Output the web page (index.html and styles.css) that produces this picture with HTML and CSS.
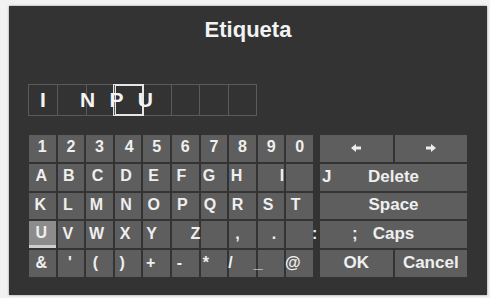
FILE: index.html
```html
<!DOCTYPE html>
<html lang="es">
<head>
<meta charset="utf-8">
<title>Etiqueta</title>
<link rel="stylesheet" href="styles.css">
</head>
<body>
<div class="screen">
  <h1 class="title">Etiqueta</h1>
  <div class="input">
    <div class="box"></div>
    <div class="box"></div>
    <div class="box"></div>
    <div class="box sel"></div>
    <div class="box"></div>
    <div class="box"></div>
    <div class="box"></div>
    <div class="box"></div>
    <div class="typed">I NPU</div>
  </div>
  <div class="keyboard">
    <div class="keys">
      <div class="k"><span>1</span></div>
      <div class="k"><span>2</span></div>
      <div class="k"><span>3</span></div>
      <div class="k"><span class="r1">4</span></div>
      <div class="k"><span>5</span></div>
      <div class="k"><span>6</span></div>
      <div class="k"><span>7</span></div>
      <div class="k"><span>8</span></div>
      <div class="k"><span>9</span></div>
      <div class="k"><span>0</span></div>

      <div class="k"><span class="l1">A</span></div>
      <div class="k"><span class="l2">B</span></div>
      <div class="k"><span class="l2">C</span></div>
      <div class="k"><span class="l2">D</span></div>
      <div class="k"><span class="l3">E</span></div>
      <div class="k"><span class="l4">F</span></div>
      <div class="k"><span class="l5">G</span></div>
      <div class="k"><span class="l6">H</span></div>
      <div class="k"><span class="r11">I</span></div>
      <div class="k"></div>

      <div class="k"><span class="l2">K</span></div>
      <div class="k"><span class="l3">L</span></div>
      <div class="k"><span class="l3">M</span></div>
      <div class="k"><span class="l2">N</span></div>
      <div class="k"><span class="l3">O</span></div>
      <div class="k"><span class="l3">P</span></div>
      <div class="k"><span class="l4">Q</span></div>
      <div class="k"><span class="l5">R</span></div>
      <div class="k"><span class="l3">S</span></div>
      <div class="k"><span class="l4">T</span></div>

      <div class="k on"><span class="l1">U</span></div>
      <div class="k"><span class="l3">V</span></div>
      <div class="k"><span class="l3">W</span></div>
      <div class="k"><span class="l3">X</span></div>
      <div class="k"><span class="l5">Y</span></div>
      <div class="k"><span class="r10">Z</span></div>
      <div class="k"></div>
      <div class="k"><span class="l5">,</span></div>
      <div class="k"><span class="r3">.</span></div>
      <div class="k"><span class="r15">:</span></div>

      <div class="k"><span class="l1">&amp;</span></div>
      <div class="k"><span class="l1">'</span></div>
      <div class="k"><span class="l4">(</span></div>
      <div class="k"><span class="l6">)</span></div>
      <div class="k"><span class="l6">+</span></div>
      <div class="k"><span class="l6">-</span></div>
      <div class="k"><span class="l8">*</span></div>
      <div class="k"><span class="l12">/</span></div>
      <div class="k"><span class="l13">_</span></div>
      <div class="k"><span class="l7">@</span></div>
    </div>
    <div class="keys side">
      <div class="k"><svg class="arrow" width="10" height="8" viewBox="0 0 10 8"><path d="M0 4 L5 0 V2.5 H10 V5.5 H5 V8 Z"/></svg></div>
      <div class="k"><svg class="arrow" width="10" height="8" viewBox="0 0 10 8"><path d="M10 4 L5 0 V2.5 H0 V5.5 H5 V8 Z"/></svg></div>
      <div class="k wide"><span class="j">J</span><span>Delete</span></div>
      <div class="k wide"><span></span><span>Space</span></div>
      <div class="k wide"><span class="semi">;</span><span>Caps</span></div>
      <div class="k"><span>OK</span></div>
      <div class="k"><span>Cancel</span></div>
    </div>
  </div>
</div>
</body>
</html>
```

FILE: styles.css
```css
html, body {
  margin: 0;
  padding: 0;
}

body {
  background: #f2f2f2;
  width: 490px;
  height: 298px;
  overflow: hidden;
  font-family: "Liberation Sans", Arial, sans-serif;
  color: #efefef;
}

.screen {
  margin: 6px 0 0 9px;
  width: 478px;
  height: 289px;
  box-sizing: border-box;
  padding-top: 12px;
  background: #333333;
  box-shadow: 0 0 2px #8a8a8a;
}

.title {
  margin: 0;
  font-size: 22px;
  line-height: 24px;
  font-weight: bold;
  text-align: center;
  color: #f2f2f2;
}

.input {
  position: relative;
  margin: 42px 0 0 19px;
  width: 229px;
  height: 32px;
  box-sizing: border-box;
  border: 1px solid #5a5a5a;
  display: grid;
  grid-template-columns: repeat(8, 1fr);
}

.box + .box {
  border-left: 1px solid #5a5a5a;
}

.sel {
  position: relative;
  z-index: 1;
  box-shadow: 0 0 0 1px #e6e6e6, inset 0 0 0 1px #e6e6e6;
}

.typed {
  position: absolute;
  left: 0;
  top: 0;
  right: 0;
  z-index: 2;
  padding-left: 11px;
  font-size: 21px;
  font-weight: bold;
  line-height: 29px;
  letter-spacing: 14.2px;
  white-space: pre;
  color: #f4f4f4;
}

.keyboard {
  margin: 19px 0 0 20px;
  display: flex;
  gap: 7px;
}

.keys {
  width: 284px;
  display: grid;
  grid-template-columns: repeat(10, 1fr);
  grid-auto-rows: 26.8px;
  gap: 2px;
}

.keys.side {
  width: 147px;
  grid-template-columns: 1fr 1fr;
}

.k {
  background: #5e5e5e;
  display: flex;
  align-items: center;
  justify-content: center;
  box-sizing: border-box;
  padding-bottom: 2px;
  font-size: 16px;
  font-weight: bold;
  white-space: nowrap;
  min-width: 0;
}

.side .k {
  font-size: 17px;
  padding-bottom: 1px;
}

.k.on {
  background: #8c8c8c;
  border-bottom: 3px solid #cfcfcf;
  padding-bottom: 0;
}

.k.wide {
  grid-column: span 2;
  display: grid;
  grid-template-columns: 1fr auto 1fr;
  align-items: center;
}

.j {
  justify-self: start;
  margin-left: 2px;
}

.semi {
  justify-self: end;
  margin-right: 15px;
}

.arrow {
  fill: #eeeeee;
  display: block;
}

/* label nudges: margin-left of 2n shifts the centred label by n px */
.l1 { margin-left: -2px; }
.l2 { margin-left: -4px; }
.l3 { margin-left: -6px; }
.l4 { margin-left: -8px; }
.l5 { margin-left: -10px; }
.l6 { margin-left: -12px; }
.l7 { margin-left: -14px; }
.l8 { margin-left: -16px; }
.l12 { margin-left: -24px; }
.l13 { margin-left: -26px; }
.r1 { margin-left: 2px; }
.r3 { margin-left: 6px; }
.r10 { margin-left: 20px; }
.r11 { margin-left: 22px; }
.r15 { margin-left: 30px; }
```
